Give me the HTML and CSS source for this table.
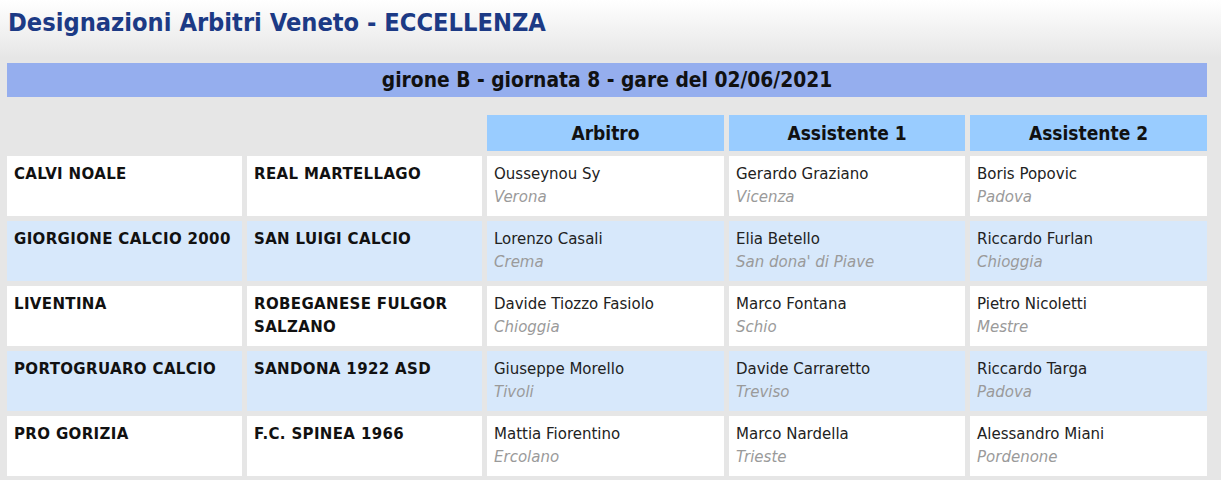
FILE: index.html
```html
<!DOCTYPE html>
<html lang="it">
<head>
<meta charset="utf-8">
<title>Designazioni Arbitri Veneto - ECCELLENZA</title>
<link rel="stylesheet" href="styles.css">
</head>
<body>
<h1 class="title">Designazioni Arbitri Veneto - ECCELLENZA</h1>
<div class="round-bar">girone B - giornata 8 - gare del 02/06/2021</div>
<div class="grid">
  <div class="head-empty"></div>
  <div class="head-empty"></div>
  <div class="head">Arbitro</div>
  <div class="head">Assistente 1</div>
  <div class="head">Assistente 2</div>

  <div class="cell team">CALVI NOALE</div>
  <div class="cell team">REAL MARTELLAGO</div>
  <div class="cell"><div class="name">Ousseynou Sy</div><div class="city">Verona</div></div>
  <div class="cell"><div class="name">Gerardo Graziano</div><div class="city">Vicenza</div></div>
  <div class="cell"><div class="name">Boris Popovic</div><div class="city">Padova</div></div>

  <div class="cell alt team">GIORGIONE CALCIO 2000</div>
  <div class="cell alt team">SAN LUIGI CALCIO</div>
  <div class="cell alt"><div class="name">Lorenzo Casali</div><div class="city">Crema</div></div>
  <div class="cell alt"><div class="name">Elia Betello</div><div class="city">San dona' di Piave</div></div>
  <div class="cell alt"><div class="name">Riccardo Furlan</div><div class="city">Chioggia</div></div>

  <div class="cell team">LIVENTINA</div>
  <div class="cell team">ROBEGANESE FULGOR SALZANO</div>
  <div class="cell"><div class="name">Davide Tiozzo Fasiolo</div><div class="city">Chioggia</div></div>
  <div class="cell"><div class="name">Marco Fontana</div><div class="city">Schio</div></div>
  <div class="cell"><div class="name">Pietro Nicoletti</div><div class="city">Mestre</div></div>

  <div class="cell alt team">PORTOGRUARO CALCIO</div>
  <div class="cell alt team">SANDONA 1922 ASD</div>
  <div class="cell alt"><div class="name">Giuseppe Morello</div><div class="city">Tivoli</div></div>
  <div class="cell alt"><div class="name">Davide Carraretto</div><div class="city">Treviso</div></div>
  <div class="cell alt"><div class="name">Riccardo Targa</div><div class="city">Padova</div></div>

  <div class="cell team">PRO GORIZIA</div>
  <div class="cell team">F.C. SPINEA 1966</div>
  <div class="cell"><div class="name">Mattia Fiorentino</div><div class="city">Ercolano</div></div>
  <div class="cell"><div class="name">Marco Nardella</div><div class="city">Trieste</div></div>
  <div class="cell"><div class="name">Alessandro Miani</div><div class="city">Pordenone</div></div>
</div>
</body>
</html>
```

FILE: styles.css
```css
html, body {
  margin: 0;
  padding: 0;
}
body {
  background: #e6e6e6 linear-gradient(to bottom, #ffffff 0px, #e6e6e6 58px) no-repeat;
  font-family: "DejaVu Sans", Verdana, sans-serif;
  color: #111;
}
.title {
  margin: 0;
  padding: 6px 0 0 8px;
  height: 57px;
  box-sizing: border-box;
  font-family: "DejaVu Sans Condensed", "Liberation Sans Narrow", sans-serif;
  font-weight: bold;
  font-size: 25.2px;
  line-height: 33px;
  color: #1c3a85;
}
.round-bar {
  margin: 6px 0 0 7px;
  width: 1200px;
  height: 34px;
  line-height: 34px;
  background: #95aeee;
  text-align: center;
  font-family: "DejaVu Sans Condensed", "Liberation Sans Narrow", sans-serif;
  font-weight: bold;
  font-size: 20.8px;
  color: #111;
}
.grid {
  display: grid;
  grid-template-columns: 235px 235px 237px 236px 237px;
  grid-auto-rows: 60px;
  grid-template-rows: 36px;
  gap: 5px;
  margin: 18px 0 0 7px;
}
.head {
  background: #99ccff;
  text-align: center;
  font-family: "DejaVu Sans Condensed", "Liberation Sans Narrow", sans-serif;
  font-weight: bold;
  font-size: 19px;
  line-height: 37px;
  color: #111;
}
.cell {
  background: #ffffff;
  padding: 7px 7px 0 7px;
  box-sizing: border-box;
  font-size: 15px;
  line-height: 23px;
}
.cell.alt {
  background: #d7e8fb;
}
.team {
  font-weight: bold;
  letter-spacing: 0.35px;
  color: #111;
}
.name {
  color: #222;
}
.city {
  color: #9a9a9a;
  font-style: italic;
}
```
